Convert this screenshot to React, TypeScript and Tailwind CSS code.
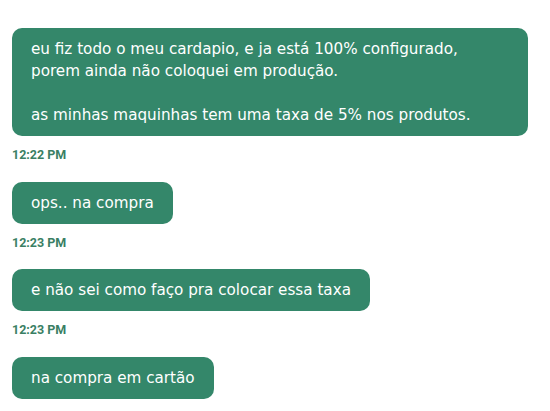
const messages = [
  {
    lines: [
      'eu fiz todo o meu cardapio, e ja está 100% configurado,',
      'porem ainda não coloquei em produção.',
      '',
      'as minhas maquinhas tem uma taxa de 5% nos produtos.',
    ],
    time: '12:22 PM',
    full: true,
  },
  { lines: ['ops.. na compra'], time: '12:23 PM' },
  { lines: ['e não sei como faço pra colocar essa taxa'], time: '12:23 PM' },
  { lines: ['na compra em cartão'] },
];

export default function App() {
  return (
    <div className="w-[550px] h-[411px] overflow-hidden bg-white">
      <div className="flex flex-col items-start pl-3 pr-[22px] pt-7">
        {messages.map((m, i) => (
          <div key={i} className={`flex flex-col items-start ${m.full ? 'self-stretch' : ''}`}>
            <div
              className={`rounded-[10px] bg-[#34876a] px-[19px] py-[10px] text-[15.2px] leading-[22px] text-white ${
                m.full ? 'self-stretch' : ''
              }`}
              style={{ fontFamily: '"DejaVu Sans", Verdana, sans-serif' }}
            >
              {m.lines.map((l, j) => (
                <div key={j} className="h-[22px] whitespace-pre">
                  {l}
                </div>
              ))}
            </div>
            {m.time && (
              <div
                className="mt-[12px] mb-[19.5px] text-[12.5px] font-bold leading-[14px] text-[#3a7f64]"
                style={{ fontFamily: 'Roboto, sans-serif' }}
              >
                {m.time}
              </div>
            )}
          </div>
        ))}
      </div>
    </div>
  );
}
